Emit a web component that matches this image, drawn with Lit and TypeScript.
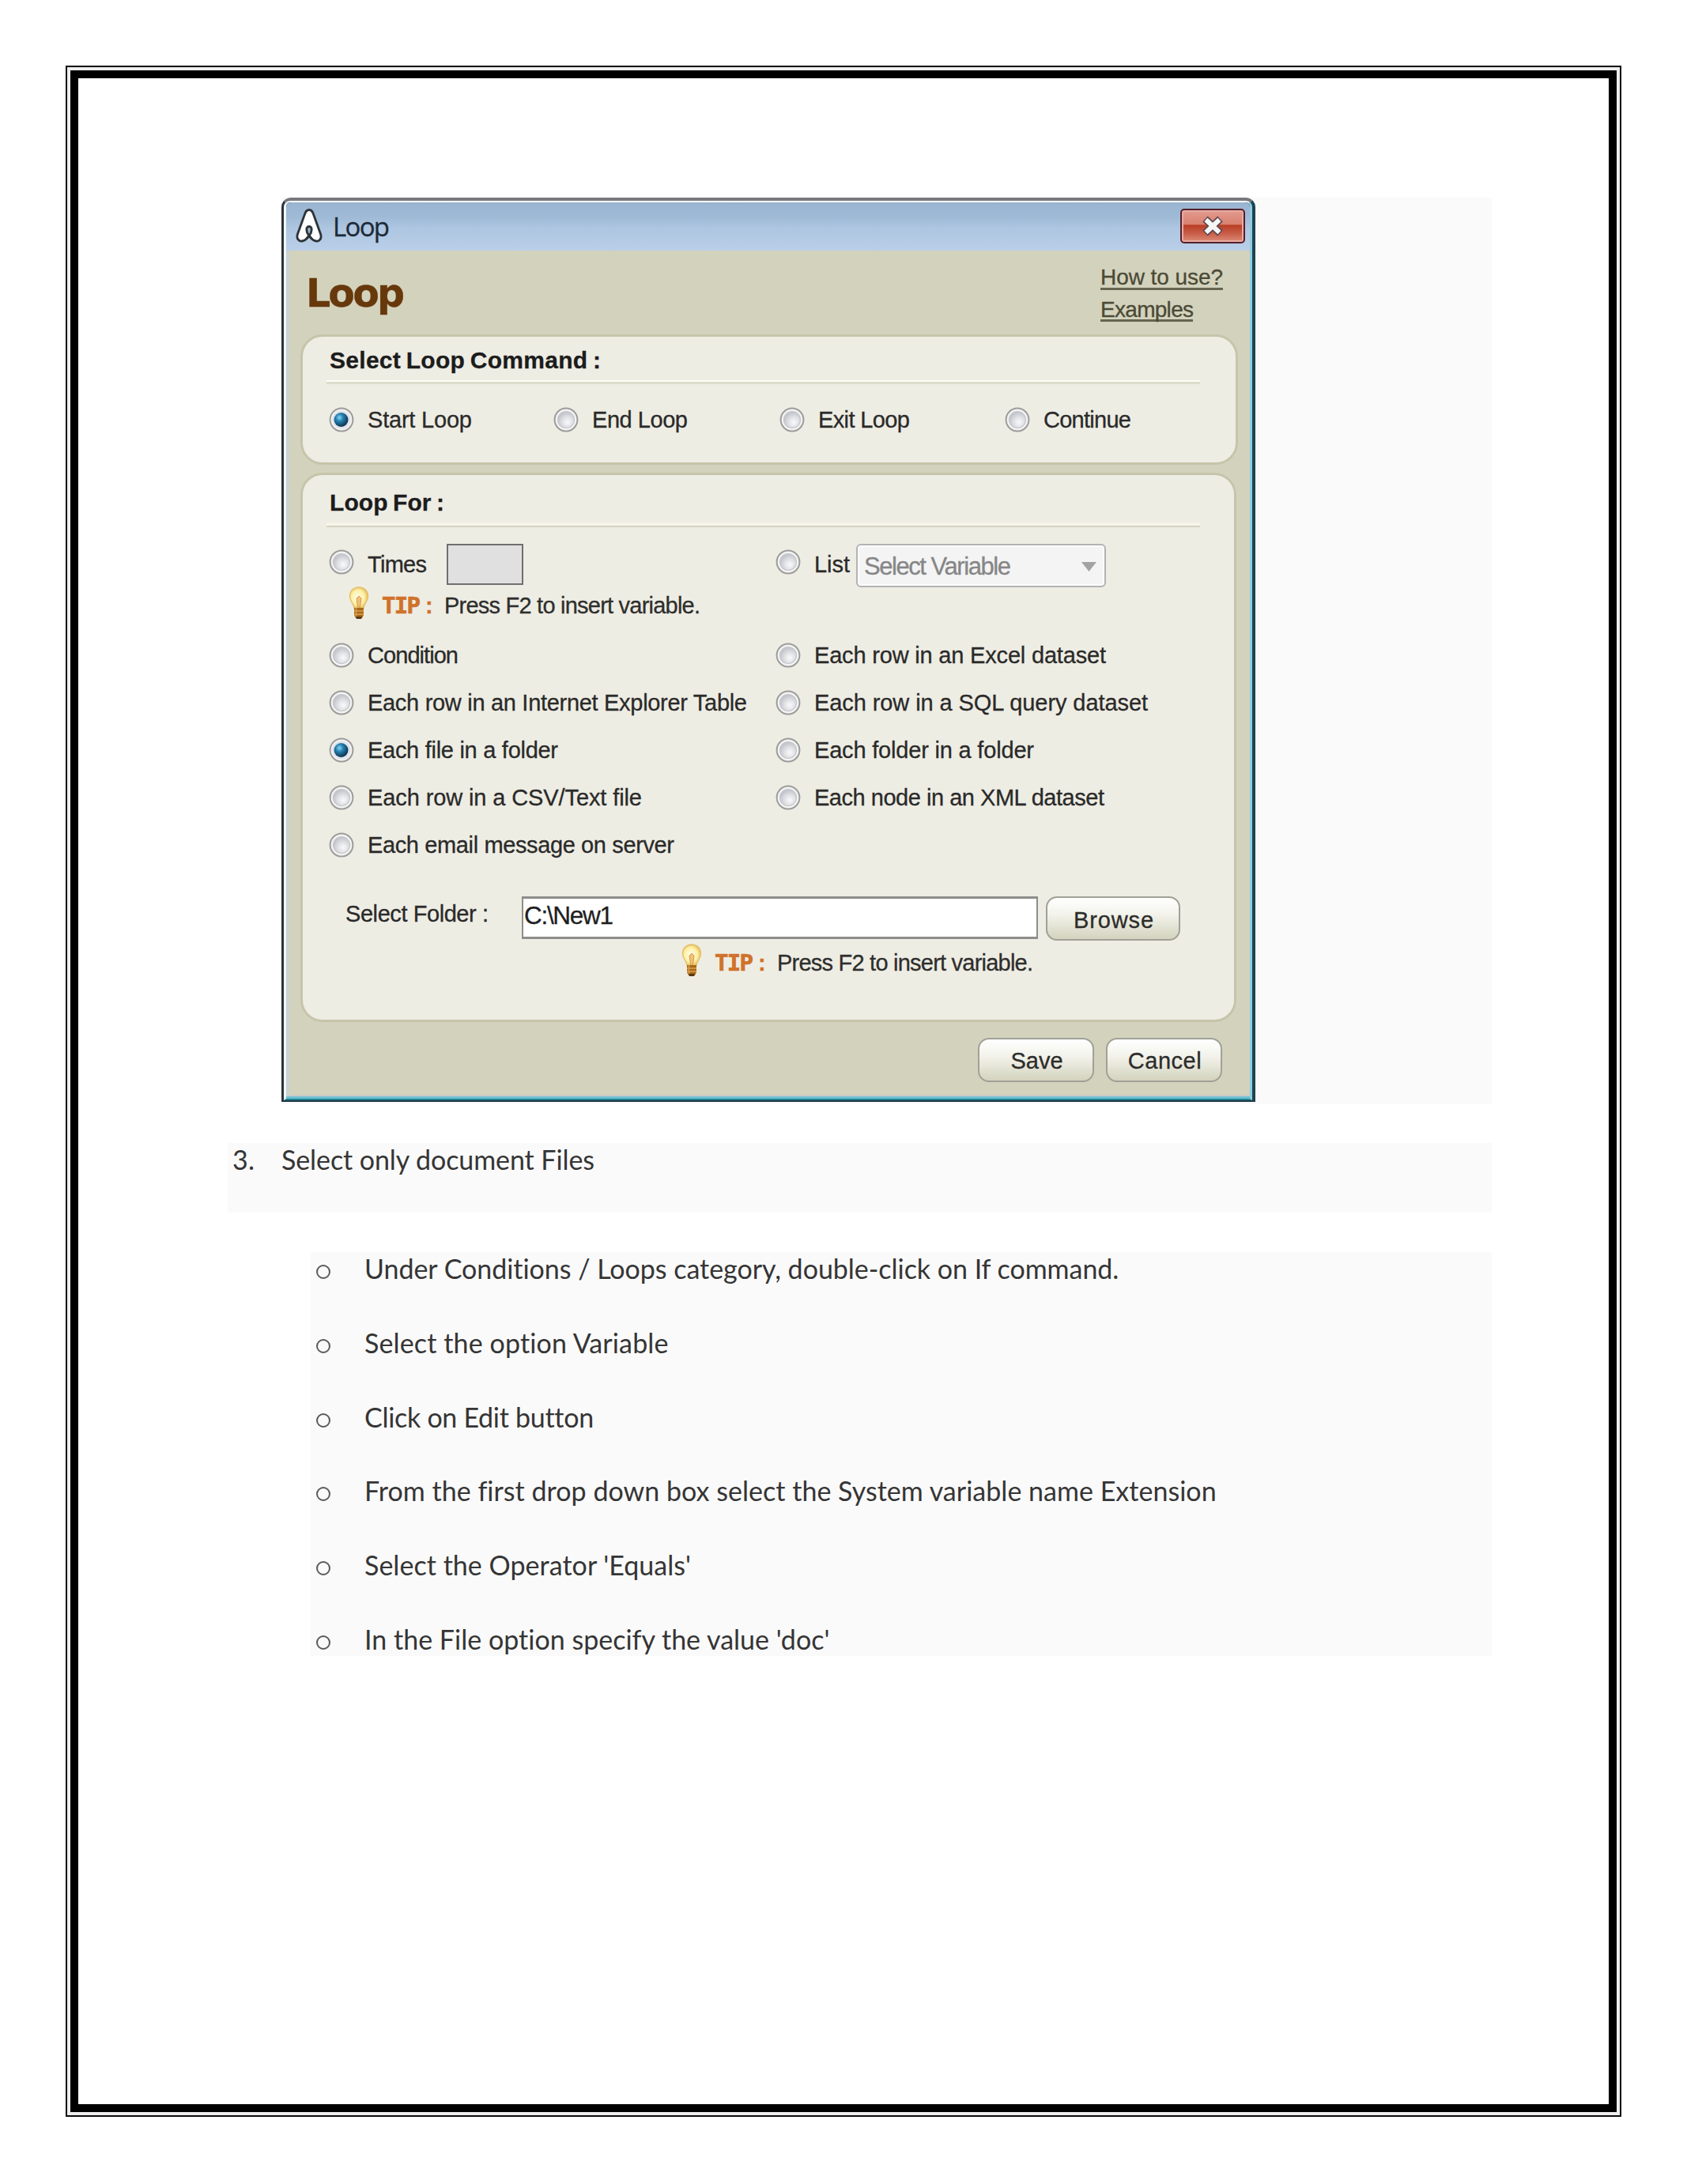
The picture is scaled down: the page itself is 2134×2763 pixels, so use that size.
import { LitElement, html, css, svg } from "lit";
import { customElement, property } from "lit/decorators.js";

/** One line of text whose tracking is adjusted so that it spans a given width. */
@customElement("fit-text")
class FitText extends LitElement {
  @property({ type: Number }) span = 0;
  @property() text = "";
  static styles = css`
    :host { display: block; white-space: pre; flex: none; }
    .line { display: inline-block; vertical-align: top; }
  `;
  updated() {
    const el = this.renderRoot.querySelector(".line") as HTMLElement;
    el.style.letterSpacing = "0px";
    const natural = el.getBoundingClientRect().width;
    const n = Math.max(1, this.text.length - 1);
    if (this.span) el.style.letterSpacing = ((this.span - natural) / n).toFixed(3) + "px";
  }
  render() {
    return html`<span class="line">${this.text}</span>`;
  }
}

@customElement("radio-dot")
class RadioDot extends LitElement {
  @property({ type: Boolean }) on = false;
  static styles = css`
    :host { display: block; flex: none; width: 32px; height: 32px; }
    svg { display: block; }
  `;
  render() {
    return html`<svg width="32" height="32" viewBox="0 0 32 32">
      <defs>
        <radialGradient id="g" cx="0.6" cy="0.65" r="0.6">
          <stop offset="0" stop-color="#fafafb" /><stop offset="0.55" stop-color="#dfe0e4" /><stop offset="1" stop-color="#c3c5cc" />
        </radialGradient>
        <radialGradient id="b" cx="0.38" cy="0.35" r="0.65">
          <stop offset="0" stop-color="#8fd6f2" /><stop offset="0.4" stop-color="#2583b4" /><stop offset="1" stop-color="#0f3350" />
        </radialGradient>
      </defs>
      <circle cx="16" cy="16" r="14.4" fill="#f3f3f3" stroke="#9c9c9b" stroke-width="2" />
      ${this.on
        ? svg`<circle cx="16" cy="16" r="11.5" fill="#dfe3ea"/><circle cx="15.5" cy="16" r="9" fill="url(#b)" />`
        : svg`<circle cx="16" cy="16" r="10.5" fill="url(#g)" stroke="#c6c7cb" stroke-width="1.2" />`}
    </svg>`;
  }
}

@customElement("tip-line")
class TipLine extends LitElement {
  static styles = css`
    :host { display: flex; align-items: flex-start; height: 41px; font: 29px/49px "Liberation Sans", Arial, sans-serif; color: #2e2e2c; }
    svg { display: block; margin-right: 16px; }
    .tag { font: bold 29px/49px "DejaVu Sans Mono", monospace; color: #d0722a; margin-right: 4px; width: 51px; -webkit-text-stroke: 0.7px #d0722a; }
    .colon { font-weight: bold; color: #d0722a; width: 24px; }
  `;
  render() {
    return html`<svg width="26" height="41" viewBox="0 0 26 41">
        <defs><radialGradient id="l" cx="0.45" cy="0.5" r="0.6">
          <stop offset="0" stop-color="#fffef2" /><stop offset="0.6" stop-color="#fdf0a4" /><stop offset="1" stop-color="#e2b048" />
        </radialGradient></defs>
        <path d="M13 1C6 1 1.500 6 1.500 12.500C1.500 19 6.500 21 7 27H19C19.500 21 24.500 19 24.500 12.500C24.500 6 20 1 13 1Z" fill="url(#l)" stroke="#e3bd63" stroke-width="1.300" />
        <path d="M10 15L13 12L16 15L14.500 26H11.500Z" fill="#f0c277" stroke="#d59a4b" stroke-width="1" />
        <path d="M7 27H19V36L17 40H9L7 36Z" fill="#a8691b" />
        <path d="M9.500 27V38M7 31H19M7 35H19" stroke="#dca24c" stroke-width="1.300" />
        <path d="M9 38H17L16 41H10Z" fill="#5a3813" />
      </svg>
      <fit-text class="tag" span="49" text="TIP"></fit-text><span class="colon">:</span>
      <fit-text span="324" text="Press F2 to insert variable."></fit-text>`;
  }
}

interface Choice { label: string; span: number; on?: boolean }

const COMMANDS: Choice[] = [
  { label: "Start Loop", span: 132, on: true },
  { label: "End Loop", span: 121 },
  { label: "Exit Loop", span: 116 },
  { label: "Continue", span: 111 },
];

const SOURCES: (Choice | null)[] = [
  { label: "Condition", span: 115 },
  { label: "Each row in an Excel dataset", span: 369 },
  { label: "Each row in an Internet Explorer Table", span: 480 },
  { label: "Each row in a SQL query dataset", span: 422 },
  { label: "Each file in a folder", span: 241, on: true },
  { label: "Each folder in a folder", span: 278 },
  { label: "Each row in a CSV/Text file", span: 347 },
  { label: "Each node in an XML dataset", span: 367 },
  { label: "Each email message on server", span: 388 },
];

const STEPS: [string, number][] = [
  ["Under Conditions / Loops category, double-click on If command.", 955],
  ["Select the option Variable", 385],
  ["Click on Edit button", 289],
  ["From the first drop down box select the System variable name Extension", 1077],
  ["Select the Operator 'Equals'", 413],
  ["In the File option specify the value 'doc'", 589],
];

@customElement("app-root")
class AppRoot extends LitElement {
  static styles = css`
    :host { display: block; width: 2134px; height: 2763px; background: #fff; box-sizing: border-box; padding: 83px 83px 85px; overflow: hidden; }
    * { box-sizing: border-box; }
    .sheet { width: 1968px; height: 2595px; border: 2px solid #0a0a0a; padding: 4px; background: #efeded; }
    .page { height: 100%; border: 10px solid #000; background: #fff; padding: 151px 0 0 189px; }
    .shot { width: 1531px; margin-left: 68px; height: 1147px; background: #fafafa; }

    .dialog { width: 1232px; height: 1144px; border-style: solid; border-width: 4px 4px 2px 3px; border-color: #77797c #1c4453 #1d3640 #2b3339; border-radius: 12px 12px 0 0; background: #1c4453; font: 29px/61px "Liberation Sans", Arial, sans-serif; color: #2a2a29; -webkit-text-stroke-width: 0.3px; }
    .frame { height: 100%; border-style: solid; border-width: 2px 3px 2px 3px; border-color: #f8fbfe #8fcde0 #1f7f90 #f1f6fa; border-radius: 8px 8px 0 0; display: flex; flex-direction: column; }
    .titlebar { height: 61px; flex: none; display: flex; align-items: flex-start; padding: 8px 6px 0 12px; background: linear-gradient(#9ab4d1 0, #9fbad6 30%, #aec6e1 55%, #bacfe9 100%); border-radius: 6px 6px 0 0; }
    .title { font: 33px/55px "Open Sans", sans-serif; margin: -5px auto 0 13px; color: #1d2a38; }
    .close { width: 82px; height: 44px; border: 2px solid #54202a; border-radius: 5px; box-shadow: inset 0 0 0 2px #e9aaa0; background: linear-gradient(#e29c90 0, #d9806f 45%, #b93d25 47%, #c9604b 75%, #dd8d79 100%); display: flex; align-items: center; justify-content: center; }
    .close svg { display: block; }
    .body { flex: 1; background: #d3d2bd; box-shadow: inset 4px 0 #cbd1d0, inset 0 -2px #c9cbc8; border-bottom: 3px solid #6fbfd2; padding: 0 15px 0 18px; }
    .head { height: 106px; display: flex; padding-left: 7px; }
    .name { font: bold 49px/70px "DejaVu Sans", Verdana, sans-serif; color: #66380b; margin: 20px auto 0 0; }
    .links { width: 174px; padding-top: 21px; color: #4b4a35; font-size: 28px; line-height: 32px; display: flex; flex-direction: column; align-items: flex-start; gap: 8px; }
    .link { height: 32px; line-height: 34px; border-bottom: 3px solid #666550; }
    .link.top { height: 29px; line-height: 25px; }

    .panel { background: #eeede4; border: 3px solid #c6c4aa; border-radius: 28px; padding-left: 30px; }
    .panel.cmd { width: 1186px; height: 165px; margin-bottom: 10px; }
    .panel.src { width: 1184px; height: 695px; }
    .caption { font-weight: bold; font-size: 30px; padding-left: 4px; color: #1c1c1c; height: 55px; line-height: 60px; word-spacing: -2px; }
    .src .caption { height: 60px; line-height: 69px; }
    .rule { width: 1105px; height: 5px; background: linear-gradient(#fdfdf8 0 2px, #dcdccc 2px 5px); }
    .src .rule { height: 6px; background: linear-gradient(#f6f5ea 0 4px, #d4d3c2 4px 6px); }

    .choice { display: flex; align-items: center; gap: 17px; height: 60px; }
    .commands { display: grid; grid-template-columns: 284px 286px 285px 200px; padding: 15px 0 0 3px; }
    .first { display: flex; padding: 21px 0 0 3px; height: 75px; line-height: 52px; }
    .first radio-dot { margin: 7px 17px 0 0; }
    .times { display: flex; width: 565px; }
    .list { display: flex; }
    .count { width: 97px; height: 52px; background: #e0e0e0; border: 2px solid #6f6f6f; margin-left: 26px; }
    .combo { width: 316px; height: 55px; margin-left: 8px; border: 2px solid #b2b3b5; border-radius: 6px; background: #f4f4f5; box-shadow: inset 0 0 0 2px #fcfcfc; color: #868686; font-size: 31px; line-height: 51px; display: flex; align-items: center; justify-content: space-between; padding: 2px 10px 0 8px; }
    .sources { display: grid; grid-template-columns: 565px 1fr; padding: 16px 0 0 3px; }
    .tip1 { padding-left: 28px; }
    .tip2 { padding: 4px 0 0 449px; }
    .folder { display: flex; padding: 35px 0 0 24px; }
    .folder .lab { line-height: 45px; width: 223px; }
    .path { width: 653px; height: 54px; background: #fff; border: 3px solid #8d8d8b; border-left-width: 2px; border-right-width: 2px; font-size: 31.500px; line-height: 42px; padding-left: 1px; color: #1f1f1f; margin-right: 10px; }
    .btn { height: 56px; border: 2px solid #a1a197; border-radius: 14px; background: linear-gradient(#fff 0, #f3f3ec 40%, #d3d3be 100%); display: flex; justify-content: center; line-height: 56px; color: #2c2c2a; padding-left: 2px; }
    .browse { width: 170px; }
    .foot { display: flex; justify-content: flex-end; gap: 15px; padding: 20px 20px 0 0; }
    .foot .btn { width: 147px; line-height: 54px; }

    .step, .steps { background: #fafafa; font: 34px/50px Lato, Carlito, sans-serif; color: #353535; }
    .step { width: 1599px; height: 88px; margin-top: 49px; padding: 0 0 0 6px; display: flex; line-height: 42px; }
    .num { width: 62px; }
    .steps { width: 1494px; height: 511px; margin: 50px 0 0 105px; padding-left: 7px; }
    .item { display: flex; height: 93.800px; line-height: 42px; }
    .ring { flex: none; width: 18px; height: 18px; border: 2px solid #5a5a5a; border-radius: 50%; margin: 16px 43px 0 0; }
  `;

  private choice(c: Choice | null) {
    return c ? html`<div class="choice"><radio-dot ?on=${!!c.on}></radio-dot><fit-text span=${c.span} text=${c.label}></fit-text></div>` : html`<div></div>`;
  }

  render() {
    return html`<div class="sheet"><div class="page">
      <div class="shot"><div class="dialog"><div class="frame">
        <div class="titlebar">
          <svg width="34" height="43" viewBox="0 0 34 43">
            <path d="M17 1.500C14 1.500 12.500 4 11.500 7L2.500 32C0.500 38 4 41.500 8 41C12 40.500 14.500 38 17 34.500C19.500 38 22 40.500 26 41C30 41.500 33.500 38 31.500 32L22.500 7C21.500 4 20 1.500 17 1.500Z" fill="#fff" stroke="#2e3338" stroke-width="2.800" />
            <path d="M17 34.500C13 29.500 12.500 22.500 17 22.500C21.500 22.500 21 29.500 17 34.500Z" fill="#9fb4cb" stroke="#2e3338" stroke-width="2.800" />
            <path d="M17 33L11.500 40M17 33L22.500 40" stroke="#2e3338" stroke-width="2" />
          </svg>
          <fit-text class="title" span="72" text="Loop"></fit-text>
          <div class="close"><svg width="32" height="26" viewBox="0 0 32 26">
            <path d="M6.500 4L25.500 22M25.500 4L6.500 22" stroke="#5d4850" stroke-width="9.500" />
            <path d="M7.500 5L24.500 21M24.500 5L7.500 21" stroke="#f6f6f6" stroke-width="6" />
          </svg></div>
        </div>
        <div class="body">
          <div class="head">
            <fit-text class="name" span="125" text="Loop"></fit-text>
            <div class="links">
              <fit-text class="link top" span="155" text="How to use?"></fit-text>
              <fit-text class="link" span="118" text="Examples"></fit-text>
            </div>
          </div>
          <div class="panel cmd">
            <fit-text class="caption" span="343" text="Select Loop Command :"></fit-text>
            <div class="rule"></div>
            <div class="commands">${COMMANDS.map((c) => this.choice(c))}</div>
          </div>
          <div class="panel src">
            <fit-text class="caption" span="145" text="Loop For :"></fit-text>
            <div class="rule"></div>
            <div class="first">
              <div class="times"><radio-dot></radio-dot><fit-text span="75" text="Times"></fit-text><div class="count"></div></div>
              <div class="list"><radio-dot></radio-dot><fit-text span="45" text="List"></fit-text>
                <div class="combo"><fit-text span="186" text="Select Variable"></fit-text>
                  <svg width="19" height="12" viewBox="0 0 19 12"><path d="M0 0H19L9.500 12Z" fill="#a3a3a5" /></svg></div>
              </div>
            </div>
            <tip-line class="tip1"></tip-line>
            <div class="sources">${SOURCES.map((c) => this.choice(c))}</div>
            <div class="folder">
              <fit-text class="lab" span="181" text="Select Folder :"></fit-text>
              <div class="path"><fit-text span="113" text="C:\\New1"></fit-text></div>
              <div class="btn browse"><fit-text span="101" text="Browse"></fit-text></div>
            </div>
            <tip-line class="tip2"></tip-line>
          </div>
          <div class="foot">
            <div class="btn"><fit-text span="66" text="Save"></fit-text></div>
            <div class="btn"><fit-text span="93" text="Cancel"></fit-text></div>
          </div>
        </div>
      </div></div></div>
      <div class="step"><fit-text class="num" span="28" text="3."></fit-text><fit-text span="396" text="Select only document Files"></fit-text></div>
      <div class="steps">${STEPS.map(([t, w]) => html`<div class="item"><div class="ring"></div><fit-text span=${w} text=${t}></fit-text></div>`)}</div>
    </div></div>`;
  }
}
